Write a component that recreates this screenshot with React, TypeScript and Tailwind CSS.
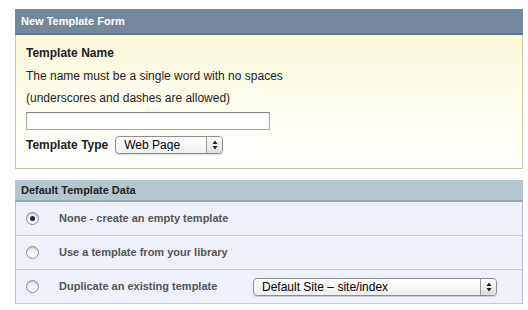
import React from 'react';

function Stepper() {
  return (
    <span className="flex h-full w-[16px] items-center justify-center rounded-r-[4px] border-l border-[#9a9a9a] bg-gradient-to-b from-white to-[#dcdcdc]">
      <svg width="6" height="10" viewBox="0 0 6 10" aria-hidden>
        <path d="M3 0.5 L5.5 4 L0.5 4 Z" fill="#222" />
        <path d="M3 9.5 L5.5 6 L0.5 6 Z" fill="#222" />
      </svg>
    </span>
  );
}

function FakeSelect({ label, width }: { label: string; width: string }) {
  return (
    <div
      className={`flex h-[18px] ${width} items-center rounded-[4px] border border-[#8e8e8e] bg-gradient-to-b from-white to-[#f0f0f0] font-normal shadow-[0_1px_1px_rgba(0,0,0,0.15)]`}
    >
      <span className="flex-1 truncate pl-[8px] text-[12px] leading-none text-black">{label}</span>
      <Stepper />
    </div>
  );
}

function Radio({ checked }: { checked?: boolean }) {
  return (
    <span className="flex h-[13px] w-[13px] items-center justify-center rounded-full border border-[#8a8a8a] bg-gradient-to-b from-[#e6e6e6] to-white shadow-[inset_0_1px_1px_rgba(0,0,0,0.15)]">
      {checked && <span className="h-[5px] w-[5px] rounded-full bg-[#1c2a3a]" />}
    </span>
  );
}

const rows = [
  { label: 'None - create an empty template', checked: true },
  { label: 'Use a template from your library' },
  { label: 'Duplicate an existing template', select: true },
];

export default function App() {
  return (
    <div className="h-[310px] w-[528px] bg-white pl-[15px] pt-[9px] font-['Liberation_Sans',Arial,sans-serif]">
      {/* New template form */}
      <div className="w-[508px]">
        <div className="flex h-[26px] items-center border-b-2 border-[#5f7586] bg-[#73899b] pl-[6px] text-[11px] font-bold text-white">
          New Template Form
        </div>
        <div className="border-x border-b border-[#ccc7a2] bg-gradient-to-b from-[#faf9d9] via-[#fefef2] via-60% to-white px-[10px] pb-[14px] pt-[7px] text-[12px] text-[#222]">
          <div className="flex h-[22px] items-center font-bold">Template Name</div>
          <div className="flex h-[23px] items-center">The name must be a single word with no spaces</div>
          <div className="flex h-[22px] items-center">(underscores and dashes are allowed)</div>
          <div className="mt-[3px] h-[18px] w-[244px] border border-[#a9a9a9] border-t-[#8c8c8c] bg-white shadow-[inset_0_1px_1px_rgba(0,0,0,0.08)]" />
          <div className="mt-[6px] flex h-[18px] items-center gap-[7px]">
            <span className="font-bold">Template Type</span>
            <FakeSelect label="Web Page" width="w-[108px]" />
          </div>
        </div>
      </div>

      {/* Default template data */}
      <div className="mt-[11px] w-[508px]">
        <div className="flex h-[22px] items-center border-b-2 border-[#97a8b2] bg-[#b6c6ce] pl-[6px] text-[11px] font-bold text-[#222]">
          Default Template Data
        </div>
        <div className="border-x border-[#b3bcd4] bg-[#eef1f9]">
          {rows.map((r) => (
            <div
              key={r.label}
              className="flex h-[34px] items-center border-b border-[#c6cbdb] pl-[10px] text-[11px] font-bold text-[#555]"
            >
              <Radio checked={r.checked} />
              <span className="ml-[20px] w-[194px]">{r.label}</span>
              {r.select && <FakeSelect label="Default Site – site/index" width="w-[244px]" />}
            </div>
          ))}
        </div>
      </div>
    </div>
  );
}
